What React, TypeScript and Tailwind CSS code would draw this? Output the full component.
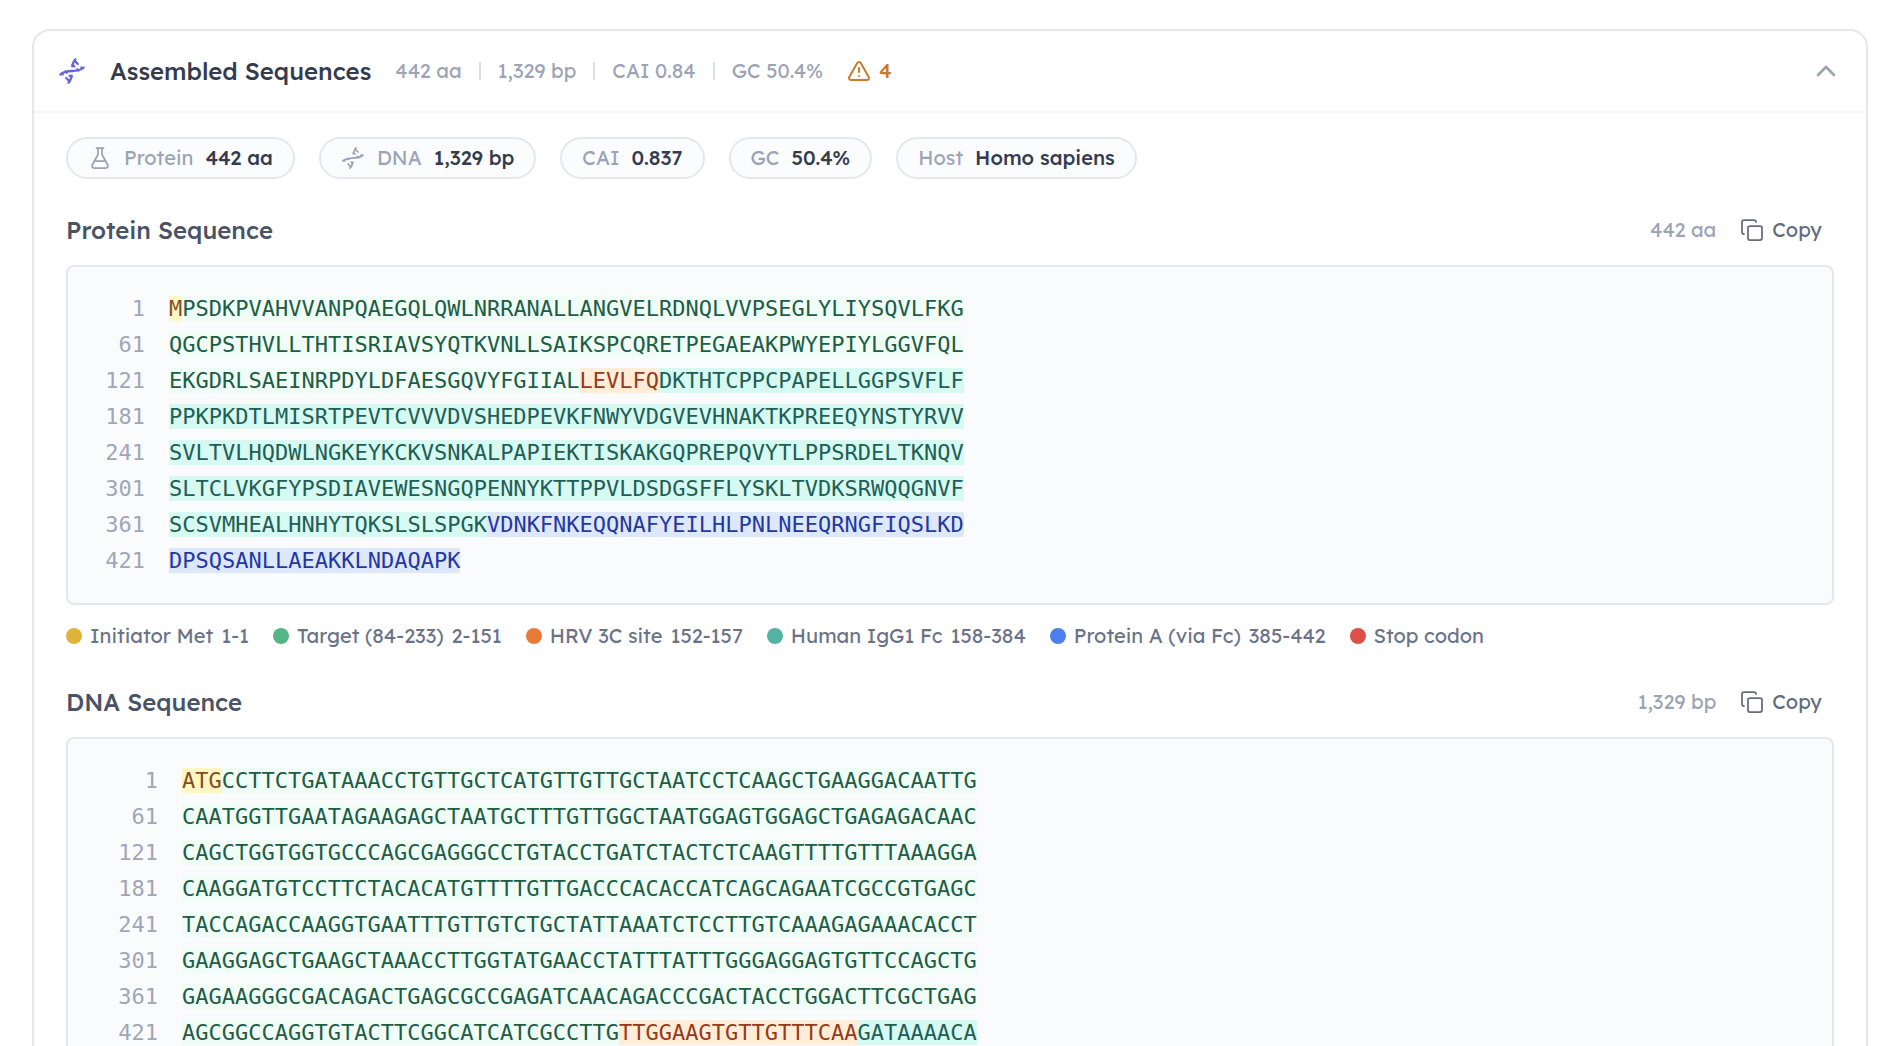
import { AlertTriangle, ChevronUp, Copy, Dna, FlaskConical } from 'lucide-react';
import type { ReactNode } from 'react';

type Feature = 'met' | 'target' | 'site' | 'fc' | 'tag';
type Segment = [Feature, string];

const featureStyle: Record<Feature, string> = {
  met: 'bg-[#fef6c3] text-[#854d1e]',
  target: 'bg-[#f0fdf6] text-[#215c45]',
  site: 'bg-[#ffedd8] text-[#963a1c]',
  fc: 'bg-[#d6faf1] text-[#225e55]',
  tag: 'bg-[#dee8fd] text-[#2438a0]',
};

const protein: Segment[][] = [
  [['met', 'M'], ['target', 'PSDKPVAHVVANPQAEGQLQWLNRRANALLANGVELRDNQLVVPSEGLYLIYSQVLFKG']],
  [['target', 'QGCPSTHVLLTHTISRIAVSYQTKVNLLSAIKSPCQRETPEGAEAKPWYEPIYLGGVFQL']],
  [['target', 'EKGDRLSAEINRPDYLDFAESGQVYFGIIAL'], ['site', 'LEVLFQ'], ['fc', 'DKTHTCPPCPAPELLGGPSVFLF']],
  [['fc', 'PPKPKDTLMISRTPEVTCVVVDVSHEDPEVKFNWYVDGVEVHNAKTKPREEQYNSTYRVV']],
  [['fc', 'SVLTVLHQDWLNGKEYKCKVSNKALPAPIEKTISKAKGQPREPQVYTLPPSRDELTKNQV']],
  [['fc', 'SLTCLVKGFYPSDIAVEWESNGQPENNYKTTPPVLDSDGSFFLYSKLTVDKSRWQQGNVF']],
  [['fc', 'SCSVMHEALHNHYTQKSLSLSPGK'], ['tag', 'VDNKFNKEQQNAFYEILHLPNLNEEQRNGFIQSLKD']],
  [['tag', 'DPSQSANLLAEAKKLNDAQAPK']],
];

const dna: Segment[][] = [
  [['met', 'ATG'], ['target', 'CCTTCTGATAAACCTGTTGCTCATGTTGTTGCTAATCCTCAAGCTGAAGGACAATTG']],
  [['target', 'CAATGGTTGAATAGAAGAGCTAATGCTTTGTTGGCTAATGGAGTGGAGCTGAGAGACAAC']],
  [['target', 'CAGCTGGTGGTGCCCAGCGAGGGCCTGTACCTGATCTACTCTCAAGTTTTGTTTAAAGGA']],
  [['target', 'CAAGGATGTCCTTCTACACATGTTTTGTTGACCCACACCATCAGCAGAATCGCCGTGAGC']],
  [['target', 'TACCAGACCAAGGTGAATTTGTTGTCTGCTATTAAATCTCCTTGTCAAAGAGAAACACCT']],
  [['target', 'GAAGGAGCTGAAGCTAAACCTTGGTATGAACCTATTTATTTGGGAGGAGTGTTCCAGCTG']],
  [['target', 'GAGAAGGGCGACAGACTGAGCGCCGAGATCAACAGACCCGACTACCTGGACTTCGCTGAG']],
  [['target', 'AGCGGCCAGGTGTACTTCGGCATCATCGCCTTG'], ['site', 'TTGGAAGTGTTGTTTCAA'], ['fc', 'GATAAAACA']],
];

const legend = [
  { dot: 'bg-[#e0b43c]', name: 'Initiator Met', range: '1-1' },
  { dot: 'bg-[#55b685]', name: 'Target (84-233)', range: '2-151' },
  { dot: 'bg-[#e87b35]', name: 'HRV 3C site', range: '152-157' },
  { dot: 'bg-[#55b3a3]', name: 'Human IgG1 Fc', range: '158-384' },
  { dot: 'bg-[#4c7fec]', name: 'Protein A (via Fc)', range: '385-442' },
  { dot: 'bg-[#dc5049]', name: 'Stop codon', range: '' },
];

const summary = ['442 aa', '1,329 bp', 'CAI 0.84', 'GC 50.4%'];

function Chip({ icon, label, value }: { icon?: ReactNode; label: string; value: string }) {
  return (
    <div className="flex h-[42px] items-center gap-3 rounded-full border-2 border-[#e4e8ed] bg-[#fafcfd] px-5">
      {icon}
      <span className="text-[#9ca3b5]">{label}</span>
      <span className="font-medium text-[#343b4e]">{value}</span>
    </div>
  );
}

function SequencePanel({ title, length, rows, gutter }: { title: string; length: string; rows: Segment[][]; gutter: string }) {
  return (
    <section>
      <div className="flex h-9 items-center justify-between pr-3">
        <h3 className="text-2xl font-medium text-[#4a5265]">{title}</h3>
        <div className="flex items-center gap-6">
          <span className="text-[#9ca3b5]">{length}</span>
          <button type="button" className="flex items-center gap-2 text-[#636c80]">
            <Copy size={24} strokeWidth={1.75} />
            Copy
          </button>
        </div>
      </div>
      <div className="mt-[17px] overflow-x-auto rounded-lg border-2 border-[#e4e7eb] bg-[#fafbfd] pt-6 pb-6 pl-6 font-['DejaVu_Sans_Mono',monospace] text-[22px] leading-9">
        {rows.map((row, index) => (
          <div key={index} className="flex gap-6 whitespace-pre">
            <span className={`${gutter} shrink-0 text-right text-[#a0a6b8]`}>{index * 60 + 1}</span>
            <span>
              {row.map(([feature, text]) => (
                <span key={feature} className={featureStyle[feature]}>{text}</span>
              ))}
            </span>
          </div>
        ))}
      </div>
    </section>
  );
}

export default function App() {
  return (
    <main className="h-screen overflow-hidden bg-white px-8 pt-[29px] font-[Lexend,Inter,sans-serif] text-xl">
      <article className="mr-1 rounded-[18px] border-2 border-[#e5e7ec]">
        <header className="flex h-[82px] items-center justify-between border-b-2 border-[#f3f4f6] px-6">
          <div className="flex items-center">
            <Dna size={28} strokeWidth={2} className="text-[#6366e0]" />
            <h2 className="ml-6 text-2xl font-medium text-[#343b4e]">Assembled Sequences</h2>
            <div className="ml-6 flex items-center gap-[17px] text-[#9ca3b5]">
              {summary.map((item, index) => (
                <div key={item} className="flex items-center gap-[17px]">
                  {index > 0 && <span className="h-[18px] w-0.5 bg-[#d9dde6]" />}
                  <span>{item}</span>
                </div>
              ))}
            </div>
            <div className="ml-6 flex items-center gap-2 font-medium text-[#cb7a2c]">
              <AlertTriangle size={24} strokeWidth={2} />
              4
            </div>
          </div>
          <button type="button" aria-label="Collapse" className="text-[#9ca3b5]">
            <ChevronUp size={32} strokeWidth={2} />
          </button>
        </header>
        <div className="px-8 pt-6">
          <div className="flex flex-wrap gap-6">
            <Chip icon={<FlaskConical size={24} strokeWidth={1.75} className="text-[#9ca3b5]" />} label="Protein" value="442 aa" />
            <Chip icon={<Dna size={24} strokeWidth={1.75} className="text-[#9ca3b5]" />} label="DNA" value="1,329 bp" />
            <Chip label="CAI" value="0.837" />
            <Chip label="GC" value="50.4%" />
            <Chip label="Host" value="Homo sapiens" />
          </div>
          <div className="mt-[33px]">
            <SequencePanel title="Protein Sequence" length="442 aa" rows={protein} gutter="w-[53px]" />
          </div>
          <ul className="mt-[15px] flex h-8 flex-wrap items-center gap-x-6 text-[#6b7388]">
            {legend.map(({ dot, name, range }) => (
              <li key={name} className="flex items-center gap-2">
                <span className={`size-4 rounded-full ${dot}`} />
                <span>{name}</span>
                {range && <span>{range}</span>}
              </li>
            ))}
          </ul>
          <div className="mt-8">
            <SequencePanel title="DNA Sequence" length="1,329 bp" rows={dna} gutter="w-[66px]" />
          </div>
        </div>
      </article>
    </main>
  );
}
